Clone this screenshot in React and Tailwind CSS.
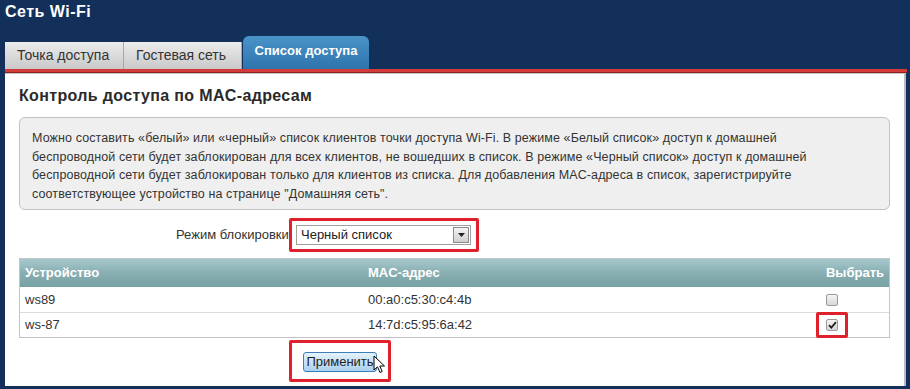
import React from 'react';

const tabs = [
  { name: 'Точка доступа', width: 'w-[119px]', active: false },
  { name: 'Гостевая сеть', width: 'w-[118px]', active: false },
  { name: 'Список доступа', width: 'w-[126px]', active: true },
];

const devices = [
  { name: 'ws89', mac: '00:a0:c5:30:c4:4b', checked: false },
  { name: 'ws-87', mac: '14:7d:c5:95:6a:42', checked: true },
];

const Checkbox = ({ checked }) => (
  <div className="shrink-0 w-[12px] h-[12px] rounded-[2px] border border-[#9a9a9a] bg-gradient-to-b from-[#f4f4f4] to-[#d6d6d6] flex items-center justify-center">
    {checked && (
      <svg width="9" height="8" viewBox="0 0 9 8">
        <path d="M1 4.2 L3.3 6.6 L8 1.2" stroke="#222" strokeWidth="1.8" fill="none" />
      </svg>
    )}
  </div>
);

const App = () => {
  return (
    <div className="w-[910px] h-[389px] overflow-hidden bg-[#12305a] font-['Liberation_Sans',Arial,sans-serif] relative">
      <div className="h-[36px] px-[5px] pt-[2px] text-white font-bold text-[16px] tracking-[0.5px] leading-[19px]">
        Сеть Wi-Fi
      </div>

      <div className="flex items-end h-[33px] pl-[5px]">
        {tabs.map((tab) =>
          tab.active ? (
            <div
              key={tab.name}
              className={`${tab.width} h-[33px] ml-[1px] rounded-t-[6px] bg-gradient-to-b from-[#4a94c8] to-[#2d74ad] text-white font-bold text-[13px] flex items-center justify-center pb-[3px]`}
            >
              {tab.name}
            </div>
          ) : (
            <div
              key={tab.name}
              className={`${tab.width} h-[27px] pl-[12px] border-r border-[#a8a8a8] bg-gradient-to-b from-[#ececec] to-[#c9c9c9] text-[#333] text-[14px] flex items-center`}
            >
              {tab.name}
            </div>
          )
        )}
      </div>

      <div className="ml-[5px] mr-[3px] h-[4px] bg-[#d33a3a] border-b border-[#8e2020]" />

      <div className="ml-[5px] mr-[4px] h-[313px] bg-white border-r-2 border-[#b8bcc4] border-t border-t-[#c8c8cc] px-[14px] pt-[13px]">
        <h2 className="text-[16px] font-bold text-[#2a2a2a] leading-[18px] tracking-[0.35px]">
          Контроль доступа по MAC-адресам
        </h2>

        <div className="mt-[12px] h-[93px] rounded-[6px] border border-[#c2c2c2] bg-[#efefef] px-[12px] pt-[11px] text-[12.5px] tracking-[0.1px] leading-[18.5px] text-[#333] whitespace-nowrap">
          Можно составить «белый» или «черный» список клиентов точки доступа Wi-Fi. В режиме «Белый список» доступ к домашней
          <br />
          беспроводной сети будет заблокирован для всех клиентов, не вошедших в список. В режиме «Черный список» доступ к домашней
          <br />
          беспроводной сети будет заблокирован только для клиентов из списка. Для добавления MAC-адреса в список, зарегистрируйте
          <br />
          соответствующее устройство на странице "Домашняя сеть".
        </div>

        <div className="flex items-center mt-[8px] h-[34px] pl-[157px]">
          <span className="text-[13px] text-[#333] w-[121px] whitespace-nowrap">Режим блокировки:</span>
          <div className="border-[3px] border-[#e0202a] rounded-[2px] pl-[4px] pr-[5px] py-[4px] -ml-[8px] relative">
            <div className="w-[175px] h-[20px] border border-[#a0a0a0] bg-white flex items-center justify-between pl-[4px] pr-[1px]">
              <span className="text-[13px] text-[#222]">Черный список</span>
              <div className="w-[16px] h-[16px] border border-[#8a8a8a] bg-gradient-to-b from-[#f4f4f4] to-[#cfcfcf] flex items-center justify-center">
                <svg width="7" height="4" viewBox="0 0 7 4">
                  <path d="M0 0 H7 L3.5 4 Z" fill="#222" />
                </svg>
              </div>
            </div>
          </div>
        </div>

        <div className="mt-[6px] border border-[#c4c4c4]">
          <div className="h-[28px] flex items-center text-white font-bold text-[13px] bg-gradient-to-b from-[#a6c9cd] via-[#88aeb1] to-[#77a1a3]">
            <div className="w-[348px] pl-[5px]">Устройство</div>
            <div className="flex-1">MAC-адрес</div>
            <div className="pr-[5px]">Выбрать</div>
          </div>
          {devices.map((d, i) => (
            <div
              key={d.name}
              className={`h-[25px] flex items-center text-[13px] text-[#333] ${i > 0 ? 'border-t border-[#dcdcdc]' : ''}`}
            >
              <div className="w-[348px] pl-[5px]">{d.name}</div>
              <div className="flex-1">{d.mac}</div>
              <div className="w-[63px] shrink-0 flex items-center">
                {d.checked ? (
                  <div className="border-[3px] border-[#e0202a] rounded-[2px] px-[7px] py-[4px] -ml-[10px]">
                    <Checkbox checked />
                  </div>
                ) : (
                  <Checkbox />
                )}
              </div>
            </div>
          ))}
        </div>

        <div className="flex mt-[2px] pl-[270px]">
          <div className="border-[3px] border-[#e0202a] rounded-[2px] pl-[11px] pr-[11px] pt-[6px] pb-[6px] relative">
            <button className="h-[20px] w-[74px] rounded-[3px] border border-[#3d7fb8] bg-gradient-to-b from-[#e6f2fb] to-[#a9d1ef] text-[13px] text-[#222] leading-none">
              Применить
            </button>
            <svg className="absolute left-[81px] top-[12px]" width="13" height="20" viewBox="0 0 13 20">
              <path d="M1 1 L1 15 L4.5 11.8 L7 17.5 L9.2 16.5 L6.8 11 L11.5 11 Z" fill="white" stroke="black" strokeWidth="1" strokeLinejoin="round" />
            </svg>
          </div>
        </div>
      </div>
    </div>
  );
};

export default App;
